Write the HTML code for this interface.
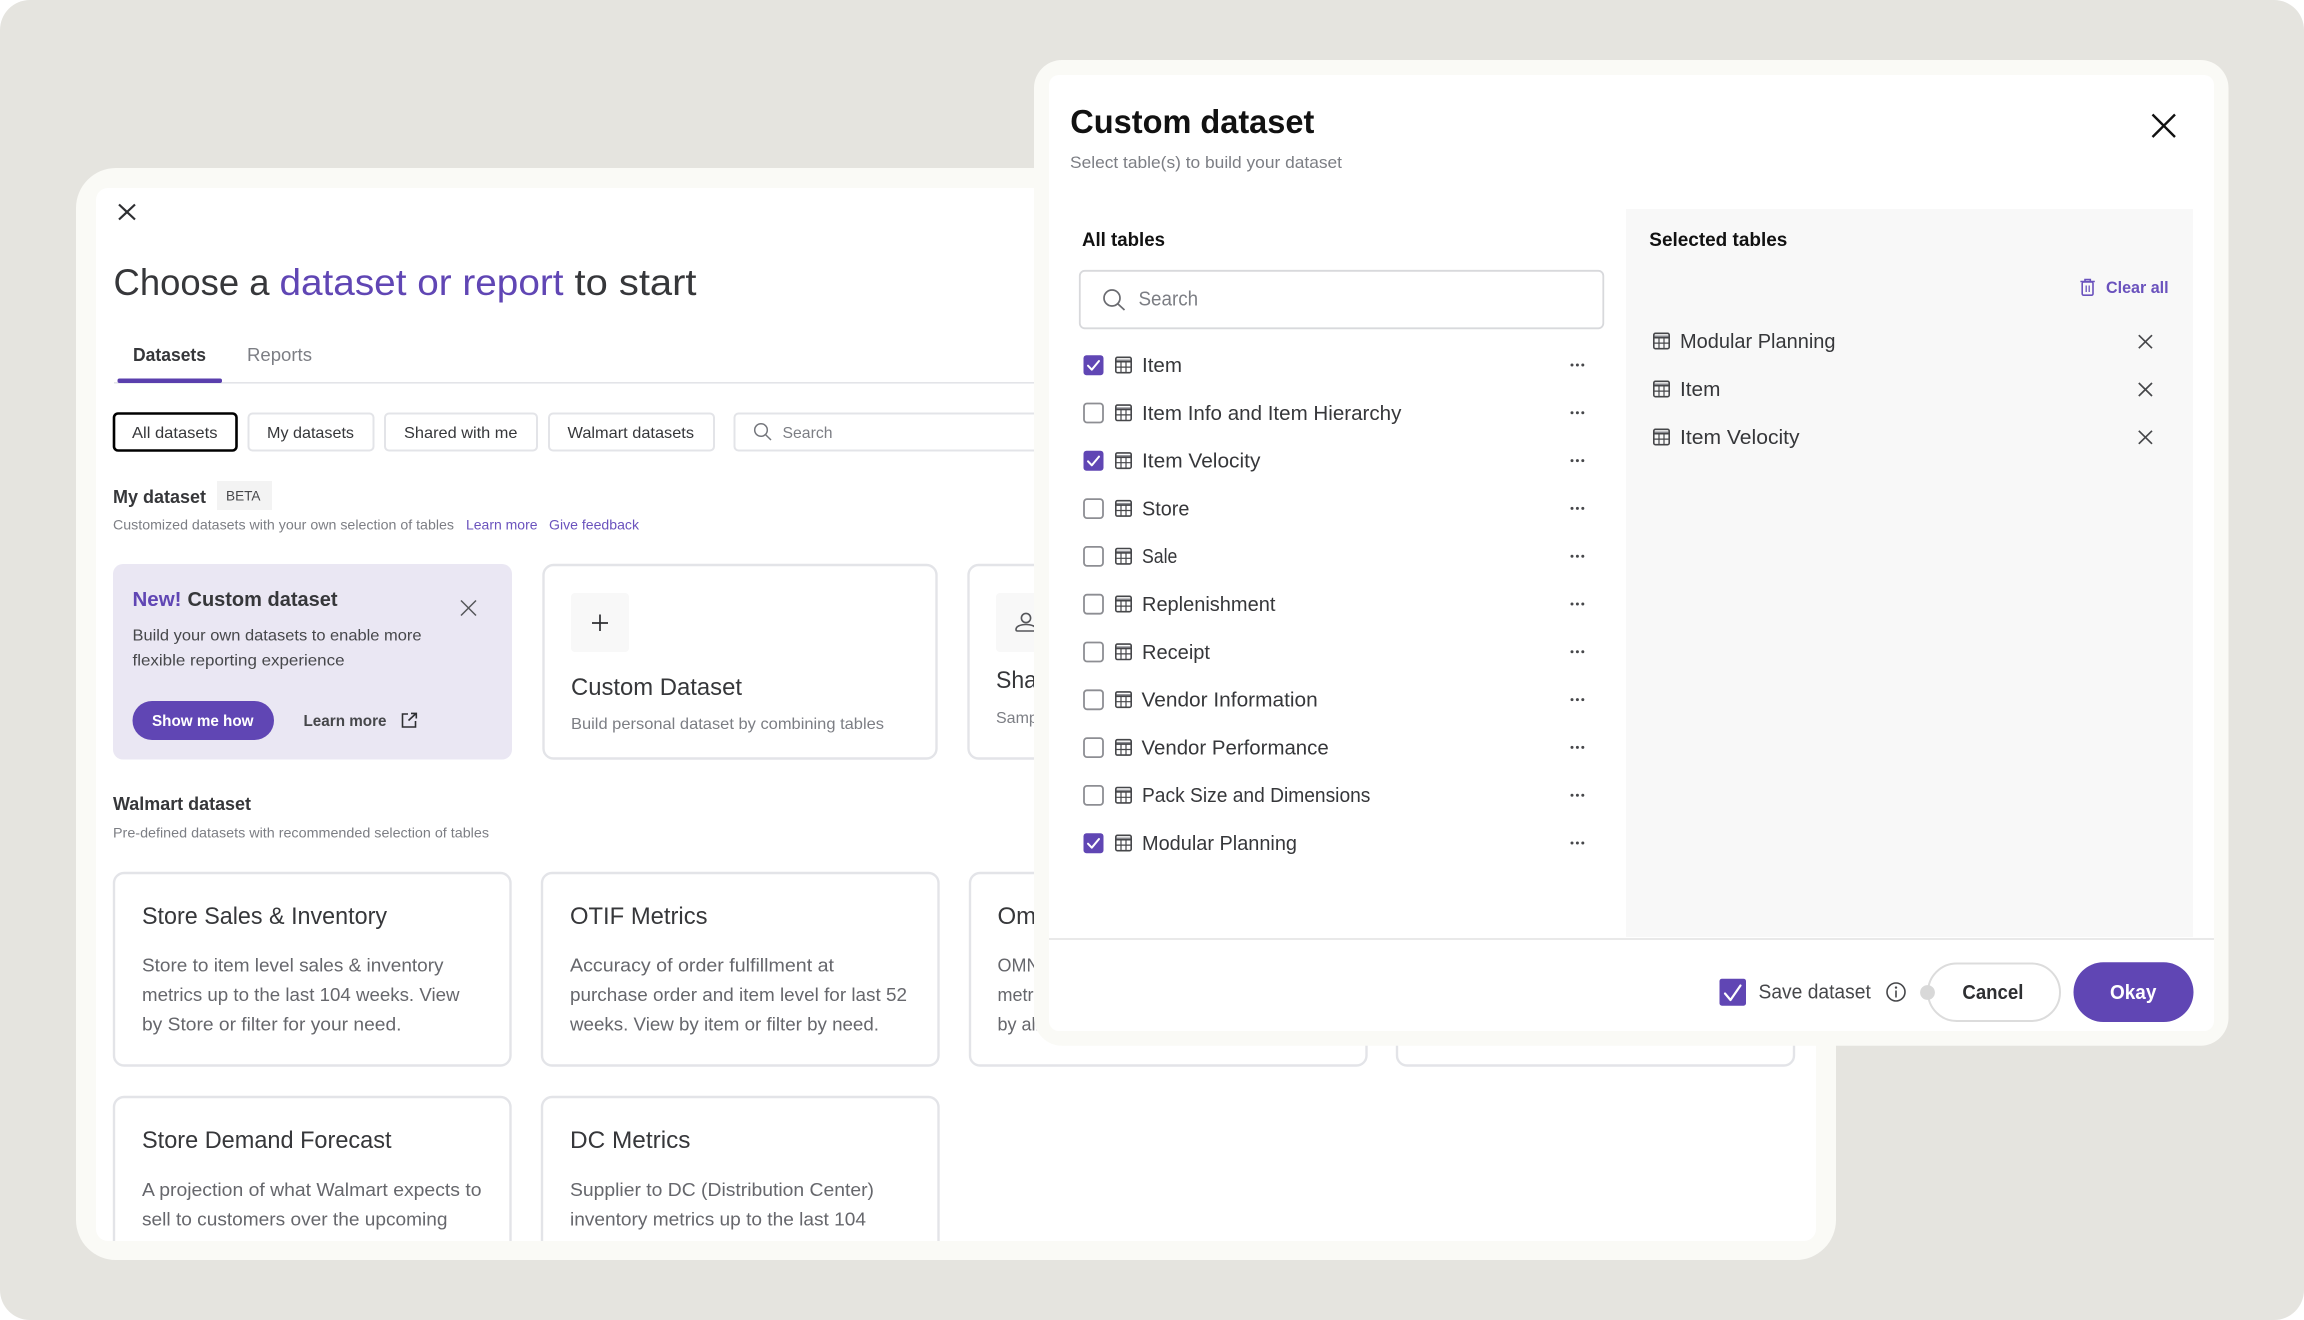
<!DOCTYPE html>
<html lang="en">
<head>
<meta charset="utf-8">
<title>Custom dataset</title>
<style>
html,body{margin:0;padding:0;background:#fff;width:2304px;height:1320px;overflow:hidden}
svg{display:block}
text{font-family:"Liberation Sans",sans-serif;white-space:pre}
.b{font-weight:700}
.dk{fill:#36373a}
.md{fill:#46474a}
.gr{fill:#7c7e84}
.bd{fill:#66676c}
.pu{fill:#6046b4}
.lp{fill:#6a52bd}
.card{fill:#fff;stroke:#e3e4e8;stroke-width:2.4}
.chip{fill:#fff;stroke:#e3e4e8;stroke-width:2}
</style>
</head>
<body>
<svg xmlns="http://www.w3.org/2000/svg" width="2304" height="1320" viewBox="0 0 2304 1320">
<defs>
<symbol id="tb" viewBox="0 0 17 17" overflow="visible">
<rect x="1" y="3" width="15" height="2.4" fill="#8d8e93"/>
<rect x=".8" y=".8" width="15.4" height="15.4" rx="1.6" fill="none" stroke="#46474a" stroke-width="1.6"/>
<path d="M1 5.2H16" fill="none" stroke="#46474a" stroke-width="1.6"/>
<path d="M1 10.6H16M6 5V16M11 5V16" fill="none" stroke="#46474a" stroke-width="1.2"/>
</symbol>
<symbol id="ck" viewBox="0 0 21 21" overflow="visible">
<rect x=".5" y=".5" width="20" height="20" rx="3" fill="#6046b4"/>
<path d="M5 11l3.8 4L16 6.3" fill="none" stroke="#fff" stroke-width="2" stroke-linecap="round" stroke-linejoin="round"/>
</symbol>
<symbol id="un" viewBox="0 0 21 21" overflow="visible">
<rect x="1" y="1" width="19" height="19" rx="3" fill="#fff" stroke="#8d8e93" stroke-width="1.8"/>
</symbol>
<symbol id="dt" viewBox="0 0 15 4" overflow="visible">
<circle cx="2" cy="2" r="1.5" fill="#46474a"/><circle cx="7.4" cy="2" r="1.5" fill="#46474a"/><circle cx="12.8" cy="2" r="1.5" fill="#46474a"/>
</symbol>
<clipPath id="back"><rect x="96" y="188" width="1720" height="1053" rx="12"/></clipPath>
</defs>

<rect x="0" y="0" width="2304" height="1320" rx="30" fill="#e5e4df"/>

<!-- back panel -->
<rect x="76" y="168" width="1760" height="1092" rx="40" fill="#fafaf6"/>
<rect x="96" y="188" width="1720" height="1053" rx="12" fill="#fff"/>
<g clip-path="url(#back)">
<path d="M119 204.500l16 15M135 204.500l-16 15" stroke="#2e2f32" stroke-width="2.2" fill="none"/>
<text x="113.500" y="295" font-size="37" class="dk" textLength="156" lengthAdjust="spacingAndGlyphs">Choose a</text>
<text x="279.500" y="295" font-size="37" class="pu" textLength="284" lengthAdjust="spacingAndGlyphs">dataset or report</text>
<text x="574.500" y="295" font-size="37" class="dk" textLength="122" lengthAdjust="spacingAndGlyphs">to start</text>

<text x="133" y="360.800" font-size="18" class="b dk" textLength="73" lengthAdjust="spacingAndGlyphs">Datasets</text>
<text x="247" y="360.800" font-size="18" class="gr" textLength="65" lengthAdjust="spacingAndGlyphs">Reports</text>
<rect x="114" y="382" width="1000" height="1.6" fill="#e3e4e8"/>
<rect x="117.500" y="378.500" width="104.500" height="4.500" rx="2" fill="#5a3fad"/>

<rect x="114" y="413.500" width="122.500" height="37" rx="4" fill="#fff" stroke="#000" stroke-width="2.6"/>
<text x="132" y="437.800" font-size="16" class="dk" textLength="85.500" lengthAdjust="spacingAndGlyphs">All datasets</text>
<rect x="248.500" y="413.500" width="125" height="37" rx="4" class="chip"/>
<text x="267" y="437.800" font-size="16" class="dk" textLength="87" lengthAdjust="spacingAndGlyphs">My datasets</text>
<rect x="385" y="413.500" width="152" height="37" rx="4" class="chip"/>
<text x="404" y="437.800" font-size="16" class="dk" textLength="113.500" lengthAdjust="spacingAndGlyphs">Shared with me</text>
<rect x="549" y="413.500" width="165" height="37" rx="4" class="chip"/>
<text x="567.500" y="437.800" font-size="16" class="dk" textLength="126.500" lengthAdjust="spacingAndGlyphs">Walmart datasets</text>
<rect x="734.500" y="413.500" width="500" height="37" rx="4" class="chip"/>
<circle cx="761" cy="430" r="6.300" fill="none" stroke="#74767c" stroke-width="1.500"/>
<path d="M765.500 434.600L771 440" stroke="#74767c" stroke-width="1.500"/>
<text x="782.500" y="437.800" font-size="16" class="gr" textLength="50" lengthAdjust="spacingAndGlyphs">Search</text>

<text x="113" y="502.800" font-size="18" class="b dk" textLength="93" lengthAdjust="spacingAndGlyphs">My dataset</text>
<rect x="217" y="481" width="55" height="29" fill="#f3f3f3"/>
<text x="226" y="500.500" font-size="14" class="md" textLength="34.500" lengthAdjust="spacingAndGlyphs">BETA</text>
<text x="113" y="529.700" font-size="14" class="gr" textLength="341" lengthAdjust="spacingAndGlyphs">Customized datasets with your own selection of tables</text>
<text x="466" y="529.700" font-size="14" class="lp" textLength="71.500" lengthAdjust="spacingAndGlyphs">Learn more</text>
<text x="549" y="529.700" font-size="14" class="lp" textLength="90" lengthAdjust="spacingAndGlyphs">Give feedback</text>

<!-- promo -->
<rect x="113" y="564" width="399" height="195.500" rx="10" fill="#eae7f3"/>
<text x="132.500" y="605.800" font-size="20" class="b pu" textLength="49" lengthAdjust="spacingAndGlyphs">New!</text>
<text x="187.500" y="605.800" font-size="20" class="b dk" textLength="150" lengthAdjust="spacingAndGlyphs">Custom dataset</text>
<path d="M461 600.500l15 15M476 600.500l-15 15" stroke="#55565a" stroke-width="1.500" fill="none"/>
<text x="132.500" y="640.700" font-size="16" class="md" textLength="289" lengthAdjust="spacingAndGlyphs">Build your own datasets to enable more</text>
<text x="132.500" y="665.300" font-size="16" class="md" textLength="212" lengthAdjust="spacingAndGlyphs">flexible reporting experience</text>
<rect x="132.500" y="701" width="141.500" height="39" rx="19.500" fill="#6046b4"/>
<text x="152" y="726" font-size="15.500" class="b" fill="#fff" textLength="101.500" lengthAdjust="spacingAndGlyphs">Show me how</text>
<text x="303.500" y="726" font-size="15.500" class="b md" textLength="83" lengthAdjust="spacingAndGlyphs">Learn more</text>
<path d="M408 714H402.500V727H415.500V721M408.500 720.500L416 713.500M411 713.400H416.300V718.500" fill="none" stroke="#2e2f32" stroke-width="1.600"/>

<!-- custom dataset card -->
<rect x="543.500" y="565" width="393" height="193.500" rx="10" class="card"/>
<rect x="571" y="593" width="58" height="59" rx="4" fill="#f8f8f8"/>
<path d="M592 623h16M600 614.500v16.500" stroke="#2e2f32" stroke-width="1.700" fill="none"/>
<text x="571" y="695" font-size="24" class="dk" textLength="171" lengthAdjust="spacingAndGlyphs">Custom Dataset</text>
<text x="571" y="729" font-size="16" class="gr" textLength="313" lengthAdjust="spacingAndGlyphs">Build personal dataset by combining tables</text>

<!-- shared card -->
<rect x="968.500" y="565" width="393" height="193.500" rx="10" class="card"/>
<rect x="996" y="593" width="58" height="59" rx="4" fill="#f8f8f8"/>
<circle cx="1026" cy="618" r="4.600" fill="none" stroke="#55565a" stroke-width="1.600"/>
<path d="M1017.500 631h17c1 0 1.500-.6 1.500-1.500 0-3-4-5-10-5s-10 2-10 5c0 .9 .5 1.500 1.500 1.500z" fill="none" stroke="#55565a" stroke-width="1.600"/>
<text x="996" y="688" font-size="24" class="dk" textLength="160" lengthAdjust="spacingAndGlyphs">Shared Dataset</text>
<text x="996" y="723" font-size="16" class="gr">Sample dataset</text>

<text x="113" y="810" font-size="18" class="b dk" textLength="138" lengthAdjust="spacingAndGlyphs">Walmart dataset</text>
<text x="113" y="837.700" font-size="14" class="gr" textLength="376" lengthAdjust="spacingAndGlyphs">Pre-defined datasets with recommended selection of tables</text>

<!-- row 1 -->
<rect x="114" y="873" width="396.500" height="192.500" rx="10" class="card"/>
<rect x="542" y="873" width="396.500" height="192.500" rx="10" class="card"/>
<rect x="970" y="873" width="396.500" height="192.500" rx="10" class="card"/>
<rect x="1397" y="873" width="397" height="192.500" rx="10" class="card"/>
<text x="142" y="924" font-size="24" class="dk" textLength="245" lengthAdjust="spacingAndGlyphs">Store Sales &amp; Inventory</text>
<text x="142" y="971.500" font-size="18" class="bd" textLength="301.500" lengthAdjust="spacingAndGlyphs">Store to item level sales &amp; inventory</text>
<text x="142" y="1001" font-size="18" class="bd" textLength="317.500" lengthAdjust="spacingAndGlyphs">metrics up to the last 104 weeks. View</text>
<text x="142" y="1030.500" font-size="18" class="bd" textLength="259.500" lengthAdjust="spacingAndGlyphs">by Store or filter for your need.</text>
<text x="570" y="924" font-size="24" class="dk" textLength="137.500" lengthAdjust="spacingAndGlyphs">OTIF Metrics</text>
<text x="570" y="971.500" font-size="18" class="bd" textLength="264" lengthAdjust="spacingAndGlyphs">Accuracy of order fulfillment at</text>
<text x="570" y="1001" font-size="18" class="bd" textLength="337" lengthAdjust="spacingAndGlyphs">purchase order and item level for last 52</text>
<text x="570" y="1030.500" font-size="18" class="bd" textLength="309" lengthAdjust="spacingAndGlyphs">weeks. View by item or filter by need.</text>
<text x="997.500" y="924" font-size="24" class="dk">Omni Metrics</text>
<text x="997.500" y="971.500" font-size="18" class="bd">OMNI metrics</text>
<text x="997.500" y="1001" font-size="18" class="bd">metrics up to</text>
<text x="997.500" y="1030.500" font-size="18" class="bd">by all</text>

<!-- row 2 -->
<rect x="114" y="1097" width="396.500" height="192" rx="10" class="card"/>
<rect x="542" y="1097" width="396.500" height="192" rx="10" class="card"/>
<text x="142" y="1148" font-size="24" class="dk" textLength="249.500" lengthAdjust="spacingAndGlyphs">Store Demand Forecast</text>
<text x="142" y="1196" font-size="18" class="bd" textLength="339.500" lengthAdjust="spacingAndGlyphs">A projection of what Walmart expects to</text>
<text x="142" y="1225.500" font-size="18" class="bd" textLength="305.500" lengthAdjust="spacingAndGlyphs">sell to customers over the upcoming</text>
<text x="142" y="1255.500" font-size="18" class="bd">weeks by Store and item</text>
<text x="570" y="1148" font-size="24" class="dk" textLength="120.500" lengthAdjust="spacingAndGlyphs">DC Metrics</text>
<text x="570" y="1196" font-size="18" class="bd" textLength="304" lengthAdjust="spacingAndGlyphs">Supplier to DC (Distribution Center)</text>
<text x="570" y="1225.500" font-size="18" class="bd" textLength="296" lengthAdjust="spacingAndGlyphs">inventory metrics up to the last 104</text>
<text x="570" y="1255.500" font-size="18" class="bd">weeks. View by DC or filter by need.</text>
</g>

<!-- dialog -->
<rect x="1034" y="60" width="1194.500" height="985.700" rx="28" fill="#fafaf6"/>
<rect x="1049" y="75" width="1165" height="956" rx="10" fill="#fff"/>
<text x="1070.300" y="133" font-size="33" class="b" fill="#111" textLength="244" lengthAdjust="spacingAndGlyphs">Custom dataset</text>
<text x="1070" y="168" font-size="17" class="gr" textLength="272" lengthAdjust="spacingAndGlyphs">Select table(s) to build your dataset</text>
<path d="M2152.500 114.500l22.500 22.500M2175 114.500l-22.500 22.500" stroke="#111" stroke-width="2.400" fill="none"/>

<rect x="1626" y="209" width="567" height="728" fill="#f8f8f8"/>
<text x="1082" y="246" font-size="19" class="b" fill="#111" textLength="83" lengthAdjust="spacingAndGlyphs">All tables</text>
<text x="1649.300" y="246" font-size="19" class="b" fill="#111" textLength="138" lengthAdjust="spacingAndGlyphs">Selected tables</text>

<rect x="1079.800" y="270.800" width="523.500" height="57.500" rx="5" fill="#fff" stroke="#d8d9dc" stroke-width="1.800"/>
<circle cx="1112" cy="298" r="8" fill="none" stroke="#6a6b70" stroke-width="1.700"/>
<path d="M1118 304L1124.500 310" stroke="#6a6b70" stroke-width="1.700"/>
<text x="1138.500" y="305.500" font-size="20" class="gr" textLength="59.600" lengthAdjust="spacingAndGlyphs">Search</text>

<!-- rows -->
<use href="#ck" x="1083" y="354.700" width="21" height="21"/><use href="#tb" x="1115" y="356.500" width="17" height="17"/>
<text x="1142" y="372" font-size="20" class="dk" textLength="40" lengthAdjust="spacingAndGlyphs">Item</text><use href="#dt" x="1570" y="363" width="15" height="4"/>
<use href="#un" x="1083" y="402.500" width="21" height="21"/><use href="#tb" x="1115" y="404.300" width="17" height="17"/>
<text x="1142" y="419.800" font-size="20" class="dk" textLength="259.400" lengthAdjust="spacingAndGlyphs">Item Info and Item Hierarchy</text><use href="#dt" x="1570" y="410.800" width="15" height="4"/>
<use href="#ck" x="1083" y="450.300" width="21" height="21"/><use href="#tb" x="1115" y="452.100" width="17" height="17"/>
<text x="1142" y="467.600" font-size="20" class="dk" textLength="118.400" lengthAdjust="spacingAndGlyphs">Item Velocity</text><use href="#dt" x="1570" y="458.600" width="15" height="4"/>
<use href="#un" x="1083" y="498.100" width="21" height="21"/><use href="#tb" x="1115" y="499.900" width="17" height="17"/>
<text x="1142" y="515.400" font-size="20" class="dk" textLength="47.400" lengthAdjust="spacingAndGlyphs">Store</text><use href="#dt" x="1570" y="506.400" width="15" height="4"/>
<use href="#un" x="1083" y="545.900" width="21" height="21"/><use href="#tb" x="1115" y="547.700" width="17" height="17"/>
<text x="1142" y="563.200" font-size="20" class="dk" textLength="35.400" lengthAdjust="spacingAndGlyphs">Sale</text><use href="#dt" x="1570" y="554.200" width="15" height="4"/>
<use href="#un" x="1083" y="593.700" width="21" height="21"/><use href="#tb" x="1115" y="595.500" width="17" height="17"/>
<text x="1142" y="611" font-size="20" class="dk" textLength="133.400" lengthAdjust="spacingAndGlyphs">Replenishment</text><use href="#dt" x="1570" y="602" width="15" height="4"/>
<use href="#un" x="1083" y="641.500" width="21" height="21"/><use href="#tb" x="1115" y="643.300" width="17" height="17"/>
<text x="1142" y="658.800" font-size="20" class="dk" textLength="68" lengthAdjust="spacingAndGlyphs">Receipt</text><use href="#dt" x="1570" y="649.800" width="15" height="4"/>
<use href="#un" x="1083" y="689.300" width="21" height="21"/><use href="#tb" x="1115" y="691.100" width="17" height="17"/>
<text x="1141.500" y="706.600" font-size="20" class="dk" textLength="176.200" lengthAdjust="spacingAndGlyphs">Vendor Information</text><use href="#dt" x="1570" y="697.600" width="15" height="4"/>
<use href="#un" x="1083" y="737.100" width="21" height="21"/><use href="#tb" x="1115" y="738.900" width="17" height="17"/>
<text x="1141.500" y="754.400" font-size="20" class="dk" textLength="187.200" lengthAdjust="spacingAndGlyphs">Vendor Performance</text><use href="#dt" x="1570" y="745.400" width="15" height="4"/>
<use href="#un" x="1083" y="784.900" width="21" height="21"/><use href="#tb" x="1115" y="786.700" width="17" height="17"/>
<text x="1142" y="802.200" font-size="20" class="dk" textLength="228.400" lengthAdjust="spacingAndGlyphs">Pack Size and Dimensions</text><use href="#dt" x="1570" y="793.200" width="15" height="4"/>
<use href="#ck" x="1083" y="832.700" width="21" height="21"/><use href="#tb" x="1115" y="834.500" width="17" height="17"/>
<text x="1142" y="850" font-size="20" class="dk" textLength="155" lengthAdjust="spacingAndGlyphs">Modular Planning</text><use href="#dt" x="1570" y="841" width="15" height="4"/>

<!-- selected -->
<path d="M2080.400 281.500H2094.800M2085 281V279.500H2090.300V281" fill="none" stroke="#6a52bd" stroke-width="1.600"/>
<rect x="2082.200" y="282" width="10.800" height="13.200" rx="1.400" fill="none" stroke="#6a52bd" stroke-width="1.600"/>
<path d="M2086.200 285.500V292M2089.200 285.500V292" stroke="#6a52bd" stroke-width="1.300" fill="none"/>
<text x="2106" y="293" font-size="17" class="b lp" textLength="62.600" lengthAdjust="spacingAndGlyphs">Clear all</text>

<use href="#tb" x="1653" y="332.500" width="17" height="17"/>
<text x="1680" y="347.800" font-size="20" class="dk" textLength="155.500" lengthAdjust="spacingAndGlyphs">Modular Planning</text>
<path d="M2138.800 335.200l13.200 13M2152 335.200l-13.200 13" stroke="#46474a" stroke-width="1.700" fill="none"/>
<use href="#tb" x="1653" y="380.500" width="17" height="17"/>
<text x="1680" y="395.800" font-size="20" class="dk" textLength="40.400" lengthAdjust="spacingAndGlyphs">Item</text>
<path d="M2138.800 383l13.200 13M2152 383l-13.200 13" stroke="#46474a" stroke-width="1.700" fill="none"/>
<use href="#tb" x="1653" y="428.500" width="17" height="17"/>
<text x="1680" y="443.800" font-size="20" class="dk" textLength="119.600" lengthAdjust="spacingAndGlyphs">Item Velocity</text>
<path d="M2138.800 430.800l13.200 13M2152 430.800l-13.200 13" stroke="#46474a" stroke-width="1.700" fill="none"/>

<!-- footer -->
<rect x="1049" y="938" width="1165" height="2" fill="#e9e9e9"/>
<rect x="1719.500" y="978.700" width="26.500" height="27" rx="2.500" fill="#6046b4"/>
<path d="M1725 993.500l5.500 6.500L1740.500 985.500" fill="none" stroke="#fff" stroke-width="2.200" stroke-linecap="round" stroke-linejoin="round"/>
<text x="1758.500" y="998.500" font-size="20" class="md" textLength="112.300" lengthAdjust="spacingAndGlyphs">Save dataset</text>
<circle cx="1896" cy="992" r="9" fill="none" stroke="#46474a" stroke-width="1.600"/>
<circle cx="1896" cy="987.600" r="1.200" fill="#46474a"/>
<path d="M1896 990.500V997.500" stroke="#46474a" stroke-width="1.600"/>
<rect x="1928" y="963.500" width="132" height="57.500" rx="28.700" fill="#fff" stroke="#dcdcdc" stroke-width="2"/>
<circle cx="1927.500" cy="992.500" r="7.400" fill="#d8d8d8"/>
<text x="1962.400" y="999" font-size="20" class="b" fill="#2e2f32" textLength="61" lengthAdjust="spacingAndGlyphs">Cancel</text>
<rect x="2073.500" y="962.300" width="120" height="59.700" rx="29.800" fill="#6046b4"/>
<text x="2110" y="999" font-size="20" class="b" fill="#fff" textLength="46.400" lengthAdjust="spacingAndGlyphs">Okay</text>
</svg>
</body>
</html>
